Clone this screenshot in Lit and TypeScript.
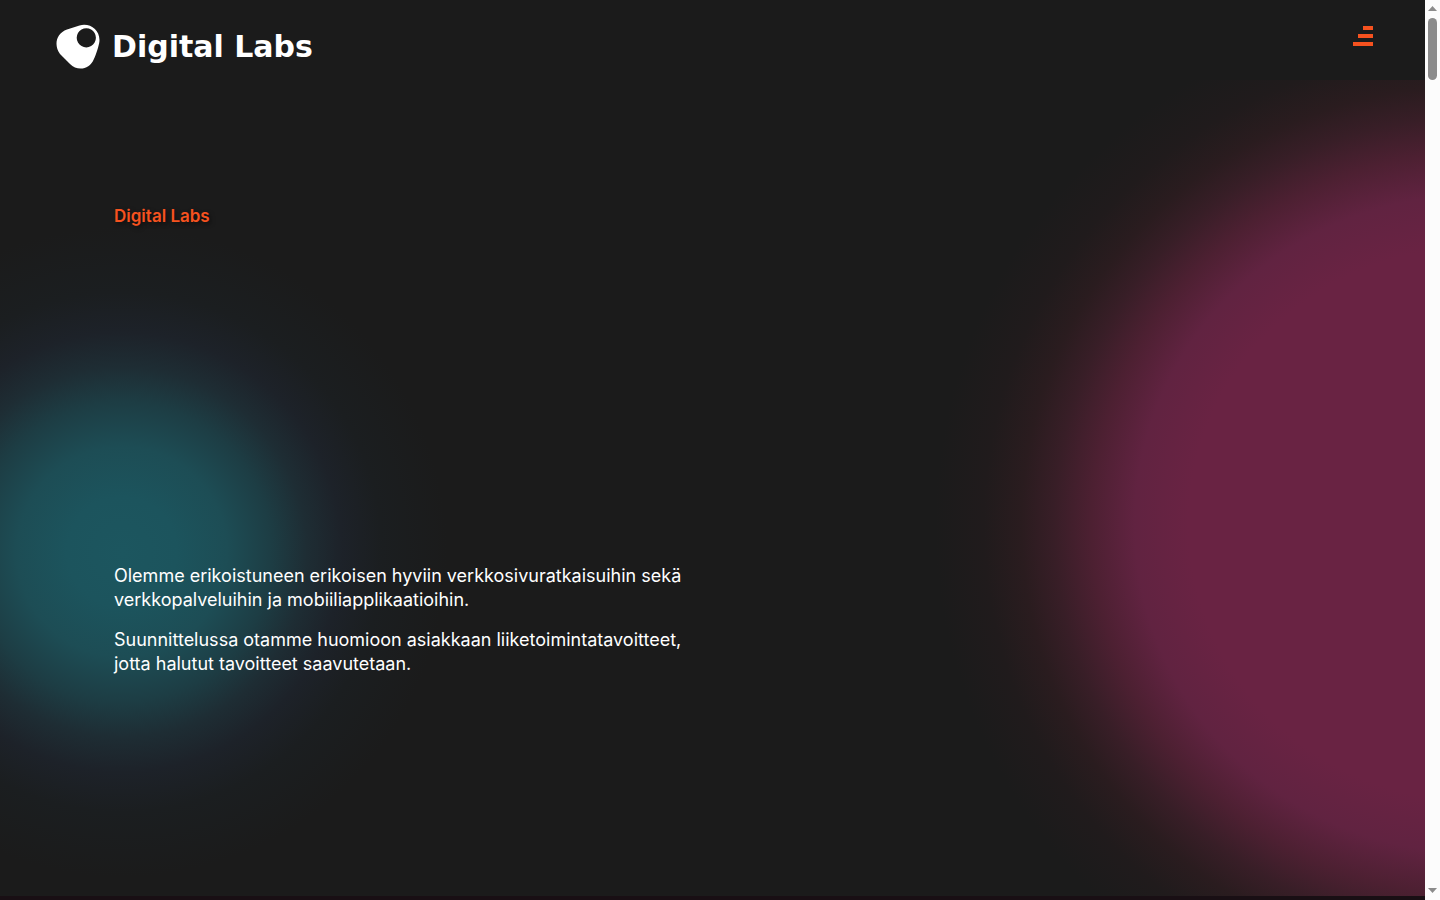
import { LitElement, html, css } from "lit";
import { customElement } from "lit/decorators.js";

@customElement("app-root")
export class AppRoot extends LitElement {
  static styles = css`
    :host {
      display: flex;
      height: 100vh;
      overflow: hidden;
      background: #1b1b1b;
      color: #fff;
      font-family: Inter, "Liberation Sans", sans-serif;
    }
    .page {
      flex: 1;
      min-width: 0;
      display: flex;
      flex-direction: column;
    }
    header {
      box-sizing: border-box;
      height: 80px;
      flex: none;
      display: flex;
      justify-content: space-between;
      align-items: flex-start;
      padding: 24px 52px 0 56px;
    }
    .brand {
      display: flex;
      align-items: center;
      gap: 12px;
      height: 46px;
      color: #fff;
      text-decoration: none;
      font: 700 30px/46px "DejaVu Sans", sans-serif;
      white-space: nowrap;
    }
    .mark,
    .bars {
      display: block;
    }
    .menu {
      border: 0;
      margin: 0;
      padding: 2px 0;
      background: none;
      color: #f6521f;
      cursor: pointer;
    }
    .hero {
      flex: 1;
      display: flex;
      flex-direction: column;
      padding: 124px 114px 0;
      background:
        radial-gradient(
          circle at 122px 472px,
          #1c565f 0,
          #1c545d 55px,
          #1d4d55 105px,
          #1d3d44 150px,
          #1e2d34 185px,
          #1d2229 220px,
          #1b1e20 260px,
          rgba(27, 27, 27, 0) 325px
        ),
        radial-gradient(
          540px 522px at calc(100% + 50px) 444px,
          #692343 0%,
          #692343 53%,
          #612341 63%,
          #4d2032 71%,
          #381e27 78%,
          #2a1c1f 84%,
          #201b1c 91%,
          #1b1b1b 100%
        );
    }
    h1 {
      margin: 0 0 336px;
      color: #f6521f;
      font-size: 17px;
      font-weight: 600;
      line-height: 24px;
      text-shadow: 2px 2px 4px rgba(0, 0, 0, 0.5);
    }
    .intro {
      max-width: 590px;
      font-size: 18px;
      line-height: 24px;
    }
    .intro p {
      margin: 0 0 16px;
    }
    .next {
      flex: none;
      height: 4px;
      background: #190f14;
    }
    .scroll {
      flex: none;
      width: 15px;
      display: flex;
      flex-direction: column;
      align-items: center;
      justify-content: space-between;
      background: #fcfcfc;
    }
    .upper {
      display: flex;
      flex-direction: column;
      align-items: center;
    }
    .thumb {
      width: 9px;
      height: 62px;
      border-radius: 5px;
      background: #8b8b8b;
    }
    .arrow {
      display: block;
      fill: #8b8b8b;
    }
  `;

  render() {
    return html`
      <div class="page">
        <header>
          <a class="brand" href="#">
            <svg class="mark" width="44" height="46" viewBox="0 0 44 46" aria-hidden="true">
              <path
                fill="#fff"
                fill-rule="evenodd"
                d="M11 5.6L23.5 1.4C34-1.6 44.5 6 43.4 17.5C43 21.5 40 31 37.8 35.2C33.5 46 21 47.2 14 40L4 30C-2.4 21.5 0 9.5 11 5.6ZM30.3 4.2a9.6 9.6 0 1 0 .01 0Z"
              />
            </svg>
            <span>Digital Labs</span>
          </a>
          <button class="menu" aria-label="Valikko">
            <svg class="bars" width="20" height="20" viewBox="0 0 20 20" fill="currentColor">
              <path d="M10 0h10v4H10zM5 8h15v4H5zM0 16h20v4H0z" />
            </svg>
          </button>
        </header>
        <main class="hero">
          <h1>Digital Labs</h1>
          <div class="intro">
            <p>Olemme erikoistuneen erikoisen hyviin verkkosivuratkaisuihin sekä verkkopalveluihin ja mobiiliapplikaatioihin.</p>
            <p>Suunnittelussa otamme huomioon asiakkaan liiketoimintatavoitteet, jotta halutut tavoitteet saavutetaan.</p>
          </div>
        </main>
        <div class="next"></div>
      </div>
      <div class="scroll" aria-hidden="true">
        <div class="upper">
          <svg class="arrow" width="15" height="18" viewBox="0 0 15 18"><path d="M3 11L7.5 6L12 11z" /></svg>
          <div class="thumb"></div>
        </div>
        <svg class="arrow" width="15" height="18" viewBox="0 0 15 18"><path d="M3 6L7.5 11L12 6z" /></svg>
      </div>
    `;
  }
}
